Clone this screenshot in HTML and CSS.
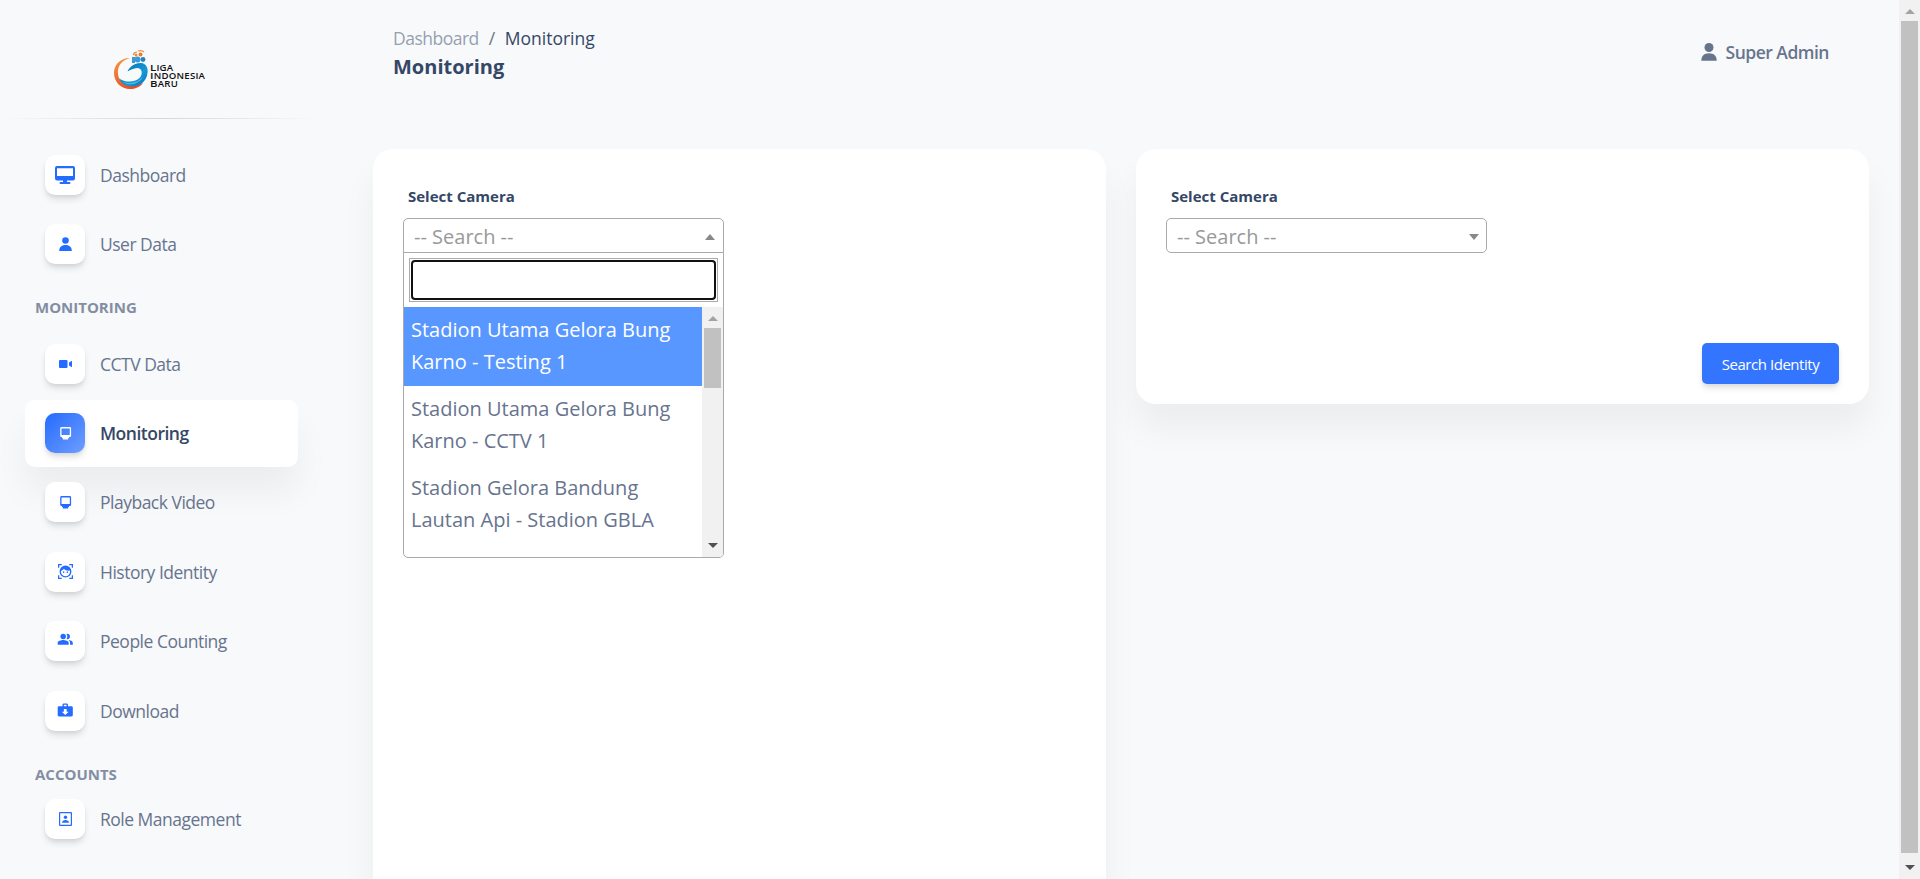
FILE: index.html
```html
<!DOCTYPE html>
<html lang="en">
<head>
<meta charset="utf-8">
<title>Monitoring</title>
<link rel="stylesheet" href="styles.css">
</head>
<body>
<div class="app">
  <aside class="sidebar">
    <div class="brand">
      <svg class="brand-mark" width="36" height="42" viewBox="0 0 36 42">
        <defs>
          <linearGradient id="orange" x1="0" y1="0" x2="0.6" y2="1"><stop offset="0" stop-color="#f59a3c"/><stop offset="1" stop-color="#ea4a24"/></linearGradient>
          <linearGradient id="blue" x1="0" y1="0" x2="1" y2="1"><stop offset="0" stop-color="#0a67a8"/><stop offset=".6" stop-color="#139ad6"/><stop offset="1" stop-color="#0b6db5"/></linearGradient>
        </defs>
        <path fill="url(#orange)" d="M17 9C7 9 1 16 1 24c0 9 7 16 16 16 5 0 10-2 13-6-10 5-24 3-25-9C4 17 9 11 17 9z"/>
        <path fill="url(#blue)" d="M14.500 22.500c2-5 8-9 13.500-8.500 5 .5 7.500 5 6.500 10-1 8-7 13.500-15.500 13.500-6 0-11-3-13-8 6 4.500 17 4 21-1 3-4 2-9-2-9.500-3 0-7 1.500-10.500 3.500z"/>
        <path fill="#4fb9e6" d="M9 32.500c7 3 16 1.500 21-5-2.500 7-14 10.500-21 5z"/>
        <path fill="#3c9ad4" d="M19 8h3v6h-3z"/><circle cx="24.500" cy="10.500" r="3" fill="#3c9ad4"/><circle cx="30" cy="10.500" r="2.400" fill="#1c86c6"/>
        <path d="M20 6c1-2 2-3 4-3m1-1c3-1 5 0 6 1" stroke="#f08a3a" stroke-width="1.200" fill="none"/>
        <circle cx="23" cy="6" r="1.500" fill="#ec8a45"/><circle cx="27.500" cy="5.500" r="2" fill="#f07a28"/>
      </svg>
      <div class="brand-name"><span><b>L</b>IGA</span><span><b>I</b>NDONESIA</span><span><b>B</b>ARU</span></div>
    </div>
    <div class="divider"></div>
    <nav class="nav">
      <a class="nav-item"><span class="nav-icon"><svg width="20" height="18" viewBox="0 0 20 18"><path fill-rule="evenodd" d="M2 0h16a2 2 0 0 1 2 2v10.500a2 2 0 0 1-2 2h-6V16h2.500a1 1 0 0 1 0 2h-9a1 1 0 0 1 0-2H8v-1.500H2a2 2 0 0 1-2-2V2a2 2 0 0 1 2-2zm0 2.300V10h16V2.300z"/></svg></span>Dashboard</a>
      <a class="nav-item"><span class="nav-icon"><svg class="nudge" width="13" height="14" viewBox="0 0 13 14"><circle cx="6.500" cy="3.500" r="3.300"/><path d="M.2 14c0-3.600 2-6 6.300-6s6.300 2.400 6.300 6z"/></svg></span>User Data</a>
      <h6 class="nav-heading">MONITORING</h6>
      <a class="nav-item"><span class="nav-icon"><svg class="nudge" width="13" height="8" viewBox="0 0 13 8"><rect width="8.500" height="8" rx="1"/><path d="M10 2.500 13 .8v6.400l-3-1.700z"/></svg></span>CCTV Data</a>
      <a class="nav-item active"><span class="nav-icon"><svg class="nudge" width="12" height="13" viewBox="0 0 12 13"><path fill-rule="evenodd" d="M1.500 0h8.300a1.300 1.300 0 0 1 1.300 1.300v7.400A1.300 1.300 0 0 1 9.800 10H9v1.300H8v1.200H3v-1.200H2V10h-.5A1.300 1.300 0 0 1 .2 8.700V1.300A1.300 1.300 0 0 1 1.500 0zm0 1.500V8h8.300V1.500z"/></svg></span>Monitoring</a>
      <a class="nav-item"><span class="nav-icon"><svg class="nudge" width="12" height="13" viewBox="0 0 12 13"><path fill-rule="evenodd" d="M1.500 0h8.300a1.300 1.300 0 0 1 1.300 1.300v7.400A1.300 1.300 0 0 1 9.800 10H9v1.300H8v1.200H3v-1.200H2V10h-.5A1.300 1.300 0 0 1 .2 8.700V1.300A1.300 1.300 0 0 1 1.500 0zm0 1.500V8h8.300V1.500z"/></svg></span>Playback Video</a>
      <a class="nav-item"><span class="nav-icon"><svg class="nudge" width="15" height="15" viewBox="0 0 24 24"><path fill-rule="evenodd" d="M12 2.500a9.500 9.500 0 1 0 0 19 9.500 9.500 0 0 0 0-19zm7.300 9.500a7.300 7.300 0 1 1-14.500-1C7 10.500 8.500 9 9.200 7.500c2 2.400 5.300 3.500 9.700 3 .2.500.4 1 .4 1.500z"/><circle cx="9" cy="13" r="1.300"/><circle cx="15" cy="13" r="1.300"/><path d="M0 0h6v2H2v4H0zM18 0h6v6h-2V2h-4zM0 18h2v4h4v2H0zM22 18h2v6h-6v-2h4z"/></svg></span>History Identity</a>
      <a class="nav-item"><span class="nav-icon"><svg class="nudge people" width="16.500" height="16.500" viewBox="0 0 24 24"><path d="M16.670 13.130C18.040 14.060 19 15.320 19 17v3h4v-3c0-2.180-3.570-3.470-6.330-3.870z"/><circle cx="9" cy="8" r="4"/><path d="M15 12c2.210 0 4-1.790 4-4s-1.790-4-4-4c-.47 0-.91.100-1.330.240C14.500 5.270 15 6.580 15 8s-.5 2.730-1.330 3.760c.42.140.86.240 1.330.240zM9 13c-2.670 0-8 1.340-8 4v3h16v-3c0-2.660-5.330-4-8-4z"/></svg></span>People Counting</a>
      <a class="nav-item"><span class="nav-icon"><svg class="nudge" width="16.500" height="16.500" viewBox="0 0 24 24"><path fill-rule="evenodd" d="M20 6h-4V4c0-1.100-.9-2-2-2h-4c-1.100 0-2 .9-2 2v2H3C1.900 6 1 6.900 1 8v11c0 1.100.9 2 2 2h18c1.100 0 2-.9 2-2V8c0-1.100-.9-2-2-2zM10 4h4v2h-4zm2 15-5-5h3v-4h4v4h3z"/></svg></span>Download</a>
      <h6 class="nav-heading accounts">ACCOUNTS</h6>
      <a class="nav-item"><span class="nav-icon"><svg class="nudge" width="13" height="14" viewBox="0 0 13 14"><path fill-rule="evenodd" d="M1 0h11a1 1 0 0 1 1 1v12a1 1 0 0 1-1 1H1a1 1 0 0 1-1-1V1a1 1 0 0 1 1-1zm.2 1.200v11.600h10.600V1.200z"/><circle cx="6.500" cy="5.300" r="1.700"/><path d="M3 10.700c0-1.600 1.700-2.600 3.500-2.600s3.500 1 3.500 2.600z"/></svg></span>Role Management</a>
    </nav>
  </aside>
  <main class="main">
    <header class="topbar">
      <div>
        <div class="crumbs"><span class="crumb-link">Dashboard</span><span class="crumb-sep">/</span><span class="crumb-current">Monitoring</span></div>
        <h6 class="page-title">Monitoring</h6>
      </div>
      <div class="user"><svg width="16" height="18" viewBox="0 0 16 18"><circle cx="8" cy="4.500" r="4.500"/><path d="M.3 17.800C.3 13 3 10.300 8 10.300s7.700 2.700 7.700 7.500z"/></svg>Super Admin</div>
    </header>
    <section class="cards">
      <div class="card card-tall">
        <label class="label">Select Camera</label>
        <div class="select open"><span>-- Search --</span><i class="caret up"></i>
          <div class="dropdown">
            <div class="search"><div class="search-frame"><input class="search-field" aria-label="Search"></div></div>
            <div class="results">
              <ul class="options">
                <li class="option highlighted">Stadion Utama Gelora Bung Karno - Testing 1</li>
                <li class="option">Stadion Utama Gelora Bung Karno - CCTV 1</li>
                <li class="option">Stadion Gelora Bandung Lautan Api - Stadion GBLA</li>
              </ul>
              <div class="scrollbar"><i class="arrow arrow-up"></i><i class="thumb"></i><i class="arrow arrow-down"></i></div>
            </div>
          </div>
        </div>
      </div>
      <div class="card card-short">
        <label class="label">Select Camera</label>
        <div class="select"><span>-- Search --</span><i class="caret"></i></div>
        <button class="button">Search Identity</button>
      </div>
    </section>
  </main>
  <div class="scrollbar page-scroll"><i class="arrow arrow-up"></i><i class="thumb"></i><i class="arrow arrow-down"></i></div>
</div>
</body>
</html>
```
FILE: styles.css
```css
* { box-sizing: border-box; }
body { margin: 0; background: #f8f9fb; color: #67748e; font-family: "Open Sans", "Noto Sans", sans-serif; font-size: 20px; line-height: 1.6; }
h6 { margin: 0; }
.app { display: flex; height: 879px; overflow: hidden; }

.sidebar { width: 320px; flex: none; }
.brand { height: 118px; padding: 49px 0 0 113px; display: flex; align-items: flex-start; }
.brand-mark { flex: none; }
.brand-name { display: flex; flex-direction: column; padding: 14.500px 0 0 1px; color: #111; font-size: 8px; font-weight: 600; letter-spacing: .2px; }
.brand-name span { height: 8.300px; line-height: 8.300px; transform: scaleX(1.2); transform-origin: left; white-space: nowrap; }
.brand-name b { font-size: 9.500px; font-weight: 600; line-height: 1px; }
.divider { height: 1px; background: linear-gradient(90deg, transparent, rgba(0,0,0,.14), transparent); }
.nav { padding: 22px 22px 0 25px; display: flex; flex-direction: column; }
.nav-item { height: 67px; margin-bottom: 2.400px; flex: none; display: flex; align-items: center; padding: 0 20px; font-size: 17.500px; letter-spacing: -.5px; border-radius: 10px; white-space: nowrap; }
.nav-icon { width: 40px; height: 40px; margin-right: 15px; flex: none; display: flex; align-items: center; justify-content: center; border-radius: 10px; background: #fff; fill: #246bff; box-shadow: 0 5px 7px -1px rgba(0,0,0,.12), 0 2px 4px -1px rgba(0,0,0,.07); }
.nudge { margin-left: 1px; }
.people { margin-bottom: 3px; }
.nav-item.active { position: relative; z-index: -1; background: #fff; color: #344767; font-weight: 600; letter-spacing: -.5px; box-shadow: 0 25px 34px rgba(0,0,0,.05); }
.active .nav-icon { fill: #fff; background: linear-gradient(135deg, #246bff, #6e9eff); }
.nav-heading { height: 50.400px; padding: 15px 0 0 10px; font-size: 15px; font-weight: 700; line-height: 24px; opacity: .8; }
.nav-heading.accounts { height: 38.600px; }

.main { width: 1579px; flex: none; padding: 0 30px 0 53px; }
.topbar { height: 149px; padding: 24px 40px 0 20px; display: flex; justify-content: space-between; }
.crumbs { display: flex; font-size: 17.500px; line-height: 28px; letter-spacing: -.5px; color: #344767; }
.crumb-link { opacity: .5; }
.crumb-sep { padding: 0 10px; color: #6c757d; }
.crumb-current { letter-spacing: 0; }
.page-title { color: #344767; font-size: 20px; font-weight: 700; line-height: 30px; }
.user { display: flex; height: 56px; align-items: center; gap: 9px; font-size: 17.500px; font-weight: 600; letter-spacing: -.5px; fill: #67748e; }
.cards { display: grid; grid-template-columns: 733px 733px; gap: 30px; align-items: start; }
.card { background: #fff; border-radius: 20px; padding: 35px 30px 25px; box-shadow: 0 25px 34px rgba(0,0,0,.05); display: flex; flex-direction: column; align-items: flex-start; }
.card-tall { height: 1000px; }
.card-short { height: 255px; }
.label { margin-left: 5px; margin-bottom: 10px; color: #344767; font-size: 15px; font-weight: 700; line-height: 24px; }
.select { position: relative; width: 321px; height: 35px; padding: 2px 7px 0 10px; display: flex; align-items: center; justify-content: space-between; border: 1px solid #aaa; border-radius: 5px; color: #999; background: #fff; }
.select.open { padding-right: 8px; border-radius: 5px 5px 0 0; }
.caret { border: 5px solid transparent; border-top: 6px solid #888; border-bottom: 0; }
.caret.up { border-top: 0; border-bottom: 6px solid #888; }
.dropdown { position: absolute; top: 33px; left: -1px; width: 321px; height: 306px; border: 1px solid #aaa; border-radius: 0 0 5px 5px; background: #fff; overflow: hidden; }
.search { padding: 5px; height: 54px; }
.search-frame { height: 44px; padding: 1px; border: 1px solid #aaa; }
.search-field { display: block; width: 100%; height: 40px; border: 2px solid #101010; border-radius: 4px; outline: 0; }
.results { display: flex; height: 250px; }
.options { margin: 0; padding: 0; flex: 1; list-style: none; overflow: hidden; }
.option { height: 79px; padding: 7px; line-height: 32px; color: #67748e; }
.option.highlighted { background: #5897ff; color: #fff; }
.scrollbar { width: 21px; flex: none; display: flex; flex-direction: column; align-items: center; background: #f1f1f1; }
.thumb { width: 17px; height: 60px; background: #c1c1c1; }
.arrow { height: 21px; display: flex; align-items: center; }
.arrow::before { content: ""; border: 5px solid transparent; }
.arrow-up { padding-top: 2px; }
.arrow-up::before { border-top: 0; border-bottom: 5px solid #a3a3a3; }
.arrow-down { margin-top: auto; padding-bottom: 2px; }
.arrow-down::before { border-bottom: 0; border-top: 5px solid #505050; }
.page-scroll .thumb { height: 832px; }
.button { align-self: flex-end; margin-top: auto; margin-bottom: -5px; width: 137px; height: 41px; padding: 0; border: 0; border-radius: 5px; background: #3375ff; color: #fff; font: 400 15px "Open Sans", sans-serif; letter-spacing: -.45px; box-shadow: 0 5px 7px -1px rgba(0,0,0,.11), 0 2px 4px -1px rgba(0,0,0,.07); }
```
